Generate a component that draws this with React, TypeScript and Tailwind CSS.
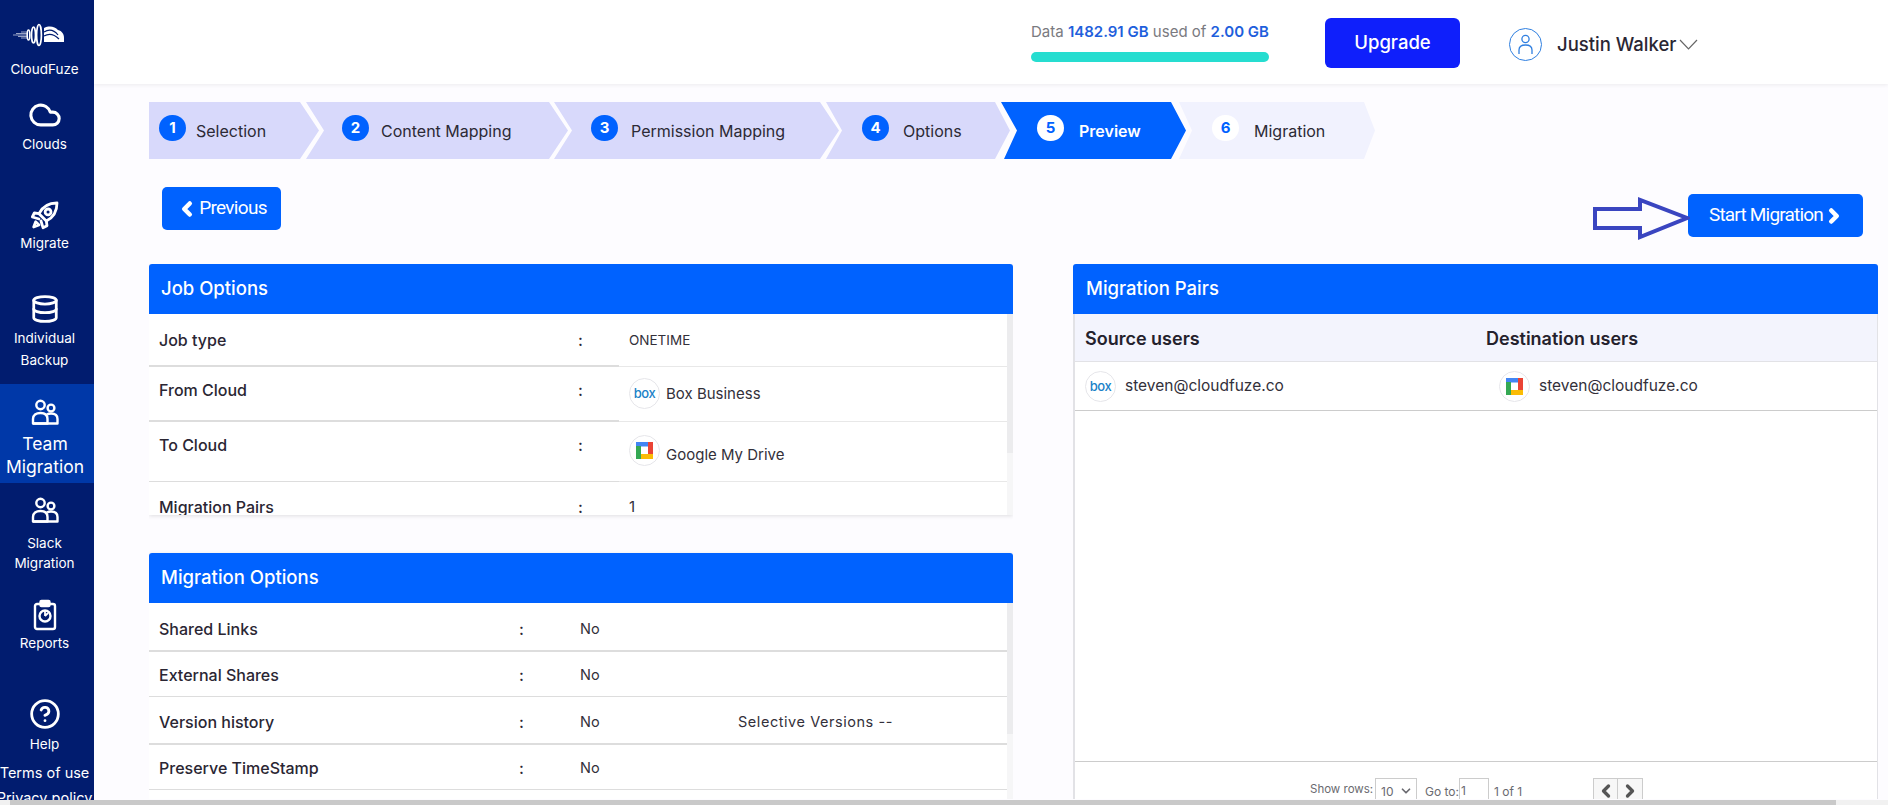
import React from "react";
import { Cloud, Database, ChevronLeft, ChevronRight, ChevronDown, CircleHelp } from "lucide-react";

function Logo() {
  return (
    <svg className="-ml-[11px]" width="52" height="24" viewBox="0 0 52 24" fill="none" stroke="#fff">
      <path d="M0 12H14M3 10.5H14M5 13.5H14M8 9H14M8 15H14" strokeWidth="0.6" />
      <ellipse cx="15.5" cy="12" rx="1.3" ry="5" strokeWidth="1.6" />
      <ellipse cx="20.5" cy="12" rx="2" ry="8" strokeWidth="1.7" />
      <ellipse cx="26" cy="12" rx="2.4" ry="10.5" strokeWidth="1.7" />
      <path d="M31 19V5C37 2 42 4 45 7C49 8 51 11 51 15V19Z" fill="#fff" stroke="none" />
      <path d="M31 9C36 6 41 7 45 12M31 13C36 10 41 11 46 16" stroke="#011c6f" strokeWidth="1.2" />
    </svg>
  );
}

function Rocket() {
  return (
    <svg width="32" height="34" viewBox="0 0 24 24" fill="none" stroke="#fff" strokeWidth="2.1" strokeLinejoin="round" strokeLinecap="round">
      <path d="M21 3C15 3 10 6 7.5 11L13 16.5C18 14 21 9 21 3Z" />
      <circle cx="14.3" cy="9.7" r="2.2" />
      <path d="M7.5 11L4 10.5L2.5 13.5L7.5 15" />
      <path d="M13 16.5L13.5 20L10.5 21.5L9 16.5" />
      <path d="M5 17L3.5 21L7.5 19.5Z" />
    </svg>
  );
}

function Team() {
  return (
    <svg width="28" height="26" viewBox="0 0 28 26" fill="none" stroke="#fff" strokeWidth="2.4" strokeLinejoin="round">
      <circle cx="9.5" cy="6" r="4.2" />
      <circle cx="20" cy="9" r="3.4" />
      <path d="M2 24.5V20C2 16 5 14 9.5 14C14 14 16.5 16 16.5 20V24.5Z" />
      <path d="M16 15.5C17 14.8 18.5 14.5 20 14.5C24 14.5 26.5 16.5 26.5 20V24.5H2" />
    </svg>
  );
}

function Report() {
  return (
    <svg width="24" height="32" viewBox="0 0 24 32" fill="none" stroke="#fff" strokeWidth="2.4" strokeLinejoin="round">
      <rect x="2" y="5" width="20" height="25" rx="2" />
      <rect x="7.5" y="2" width="9" height="5" rx="1" fill="#fff" />
      <circle cx="12" cy="17" r="5.5" />
      <path d="M12 17L15 14M12 12V17" strokeWidth="1.8" />
    </svg>
  );
}

function BoxLogo() {
  return (
    <span className="w-[31px] h-[31px] rounded-full border border-[#e6e6ea] bg-white flex items-center justify-center shrink-0">
      <span className="text-[13px] leading-none font-medium text-[#1a82c8] tracking-[-0.5px]">box</span>
    </span>
  );
}

function DriveLogo() {
  return (
    <span className="w-[31px] h-[31px] rounded-full border border-[#e6e6ea] bg-white flex items-center justify-center shrink-0">
      <svg width="17" height="17" viewBox="0 0 17 17">
        <rect x="0" y="0" width="13" height="4.5" fill="#4285f4" />
        <rect x="12" y="0" width="5" height="12" fill="#ea4335" />
        <rect x="4" y="12" width="13" height="5" fill="#fbbc05" />
        <rect x="0" y="4" width="5" height="13" fill="#34a853" />
      </svg>
    </span>
  );
}

function Step({ n, label, className, state }: { n: number; label: string; className: string; state: "done" | "active" | "todo" }) {
  const circle = state === "done" ? "bg-[#0062ff] text-white" : "bg-white text-[#0062ff]";
  const text = state === "active" ? "text-white font-semibold" : "text-[#2c2a35]";
  return (
    <div className={`h-[57px] flex items-center shrink-0 ${className}`}>
      <span className={`w-[27px] h-[26px] rounded-full flex items-center justify-center mb-[5px] text-[15px] font-bold shrink-0 ${circle}`}>{n}</span>
      <span className={`text-[16px] whitespace-nowrap ${text}`}>{label}</span>
    </div>
  );
}

function JobRow({ label, className, children }: { label: string; className: string; children: React.ReactNode }) {
  return (
    <div className="flex">
      <div className={`w-[470px] flex shrink-0 pl-[10px] border-[#ddd] ${className}`}>
        <span className="w-[419px] text-[16px] leading-[20px] font-medium text-[#2a2633]">{label}</span>
        <span className="text-[16px] leading-[20px] font-medium text-[#2a2633]">:</span>
      </div>
      <div className={`flex-1 pl-[10px] text-[15px] leading-[20px] text-[#33303a] border-[#e8e8e8] ${className.replace("border-b-2", "border-b")}`}>{children}</div>
    </div>
  );
}

function OptRow({ label, value, extra, className }: { label: string; value: string; extra?: string; className: string }) {
  return (
    <div className={`flex pl-[10px] border-[#ddd] ${className}`}>
      <span className="w-[360px] shrink-0 text-[16px] leading-[20px] font-medium text-[#2a2633]">{label}</span>
      <span className="w-[61px] shrink-0 text-[16px] leading-[20px] font-medium text-[#2a2633]">:</span>
      <span className="w-[158px] shrink-0 text-[14.5px] leading-[20px] text-[#33303a]">{value}</span>
      {extra && <span className="text-[14.5px] leading-[20px] tracking-[0.55px] text-[#33303a] whitespace-nowrap">{extra}</span>}
    </div>
  );
}

export default function App() {
  return (
    <div className="w-[1888px] h-[805px] overflow-hidden flex flex-col bg-[#fdfcff] [font-family:Inter,sans-serif]">
      <div className="flex h-[800px] overflow-hidden">
        <aside className="w-[94px] shrink-0 h-[800px] overflow-hidden bg-[#011c6f] text-white flex flex-col items-center text-center">
          <div className="h-[84px] w-full flex flex-col items-center pr-[5px] pt-[23px] gap-[13px] shrink-0">
            <Logo />
            <span className="text-[13.5px] leading-[18px] whitespace-nowrap">CloudFuze</span>
          </div>
          <div className="h-[106px] w-full flex flex-col items-center pr-[5px] pt-[14px] gap-[3px] shrink-0">
            <Cloud size={34} strokeWidth={2.2} />
            <span className="text-[13.5px] leading-[18px]">Clouds</span>
          </div>
          <div className="h-[100px] w-full flex flex-col items-center pr-[5px] pt-[8px] gap-[2px] shrink-0">
            <Rocket />
            <span className="text-[13.5px] leading-[18px]">Migrate</span>
          </div>
          <div className="h-[94px] w-full flex flex-col items-center pr-[5px] pt-[4px] shrink-0">
            <Database size={30} strokeWidth={2.2} />
            <span className="text-[13.5px] leading-[22px] mt-[3px]">Individual<br />Backup</span>
          </div>
          <div className="h-[99px] w-full bg-[#0038a8] flex flex-col items-center pr-[4px] pt-[15px] gap-[7px] shrink-0">
            <Team />
            <span className="text-[17.5px] leading-[23px]">Team<br />Migration</span>
          </div>
          <div className="h-[112px] w-full flex flex-col items-center pr-[5px] pt-[14px] gap-[10px] shrink-0">
            <Team />
            <span className="text-[13.5px] leading-[20px]">Slack<br />Migration</span>
          </div>
          <div className="h-[100px] w-full flex flex-col items-center pr-[5px] pt-[4px] gap-[3px] shrink-0">
            <Report />
            <span className="text-[13.5px] leading-[18px]">Reports</span>
          </div>
          <div className="w-full flex flex-col items-center pr-[5px] pt-[3px] shrink-0">
            <CircleHelp size={32} strokeWidth={2.1} />
            <span className="text-[13.5px] leading-[18px] mt-[5px]">Help</span>
            <span className="text-[14.5px] leading-[20px] mt-[10px] whitespace-nowrap">Terms of use</span>
            <span className="text-[14.5px] leading-[20px] mt-[5px] whitespace-nowrap">Privacy policy</span>
          </div>
        </aside>

        <div className="flex-1 min-w-0 flex flex-col">
          <header className="h-[84px] shrink-0 bg-white shadow-[0_1px_4px_rgba(0,0,0,0.07)] flex items-center">
            <div className="ml-[937px] w-[238px] shrink-0 -mt-[3px] pt-[2px]">
              <div className="text-[15px] leading-[20px] text-[#7a7a80] whitespace-nowrap">
                Data <span className="font-semibold text-[#1f5fdc]">1482.91 GB</span> used of <span className="font-semibold text-[#1f5fdc]">2.00 GB</span>
              </div>
              <div className="h-[10px] mt-[10px] rounded-[5px] bg-[#26ddd0]" />
            </div>
            <button className="ml-[56px] w-[135px] h-[50px] rounded-[6px] bg-[#0f1ffb] text-white text-[18.5px] font-medium mt-[2px] shrink-0">Upgrade</button>
            <span className="ml-[49px] w-[33px] h-[33px] rounded-full border border-[#2f7fe0] flex flex-col items-center justify-center shrink-0 mt-[4px]">
              <svg width="17" height="21" viewBox="0 0 17 21" fill="none" stroke="#2f7fe0" strokeWidth="1.3">
                <circle cx="8.5" cy="5" r="3.6" />
                <path d="M2 20V16C2 12.5 5 11 8.5 11C12 11 15 12.5 15 16V20" />
              </svg>
            </span>
            <span className="ml-[15px] text-[18.5px] font-medium text-[#2a2633] whitespace-nowrap mt-[6px]">Justin Walker</span>
            <svg className="ml-[3px] mt-[4px]" width="19" height="11" viewBox="0 0 19 11" fill="none" stroke="#666" strokeWidth="1.2">
              <path d="M1 1L9.5 10L18 1" />
            </svg>
          </header>

          <main className="flex-1 min-h-0 pl-[55px] pr-[10px] pt-[18px] relative">
            <div className="flex">
              <Step n={1} label="Selection" state="done" className="w-[170px] pl-[10px] gap-[10px] bg-[#d8d9fb] [clip-path:polygon(0_0,calc(100%_-_19px)_0,100%_50%,calc(100%_-_19px)_100%,0_100%)]" />
              <Step n={2} label="Content Mapping" state="done" className="w-[262px] ml-[-13px] pl-[36px] gap-[12px] bg-[#d8d9fb] [clip-path:polygon(0_0,calc(100%_-_19px)_0,100%_50%,calc(100%_-_19px)_100%,0_100%,18px_50%)]" />
              <Step n={3} label="Permission Mapping" state="done" className="w-[285px] ml-[-14px] pl-[37px] gap-[13px] bg-[#d8d9fb] [clip-path:polygon(0_0,calc(100%_-_19px)_0,100%_50%,calc(100%_-_19px)_100%,0_100%,18px_50%)]" />
              <Step n={4} label="Options" state="done" className="w-[184px] ml-[-13px] pl-[36px] gap-[14px] bg-[#d8d9fb] [clip-path:polygon(0_0,calc(100%_-_15px)_0,100%_50%,calc(100%_-_15px)_100%,0_100%,16px_50%)]" />
              <Step n={5} label="Preview" state="active" className="w-[185px] ml-[-9px] pl-[36px] gap-[15px] bg-[#0062ff] [clip-path:polygon(0_0,calc(100%_-_15px)_0,100%_50%,calc(100%_-_15px)_100%,3px_100%,16px_50%)]" />
              <Step n={6} label="Migration" state="todo" className="w-[196px] ml-[-7px] pl-[33px] gap-[15px] bg-[#f1f2fe] [clip-path:polygon(0_0,calc(100%_-_11px)_0,100%_50%,calc(100%_-_11px)_100%,0_100%,13px_50%)]" />
            </div>

            <div className="h-[105px] flex justify-between items-start">
              <button className="mt-[28px] ml-[13px] w-[119px] h-[43px] rounded-[5px] bg-[#0062ff] text-white text-[19px] tracking-[-0.7px] [font-family:Roboto,sans-serif] flex items-center justify-center gap-[1px]">
                <ChevronLeft size={22} strokeWidth={5} />Previous
              </button>
              <button className="mt-[35px] mr-[15px] w-[175px] h-[43px] rounded-[5px] bg-[#0062ff] text-white text-[19px] tracking-[-0.8px] [font-family:Roboto,sans-serif] flex items-center justify-center gap-0 pl-[3px]">
                Start Migration<ChevronRight size={22} strokeWidth={5} />
              </button>
            </div>
            <svg className="absolute left-[1498px] top-[113px]" width="98" height="44" viewBox="0 0 98 44" fill="none" stroke="#3a45c0" strokeWidth="4">
              <path d="M3 12H48V3L95 21L48 40V31H3Z" />
            </svg>

            <div className="flex gap-[60px] h-[535px] items-start">
              <div className="w-[864px] shrink-0 h-[535px] overflow-hidden flex flex-col gap-[38px]">
                <section className="h-[251px] shrink-0 bg-white shadow-[0_1px_4px_rgba(0,0,0,0.12)] rounded-t-[3px] overflow-hidden flex flex-col">
                  <div className="h-[50px] shrink-0 bg-[#0062ff] text-white text-[18.5px] font-medium flex items-center pl-[12px]">Job Options</div>
                  <div className="flex-1 min-h-0 flex overflow-hidden">
                    <div className="flex-1 min-w-0">
                      <JobRow label="Job type" className="h-[53px] pt-[16px] border-b-2"><span className="text-[13.5px]">ONETIME</span></JobRow>
                      <JobRow label="From Cloud" className="h-[55px] pt-[13px] border-b-2">
                        <span className="flex items-center gap-[6px] -mt-[2px]"><BoxLogo />Box Business</span>
                      </JobRow>
                      <JobRow label="To Cloud" className="h-[60px] pt-[13px] border-b">
                        <span className="flex items-center gap-[6px] mt-[0px]"><DriveLogo /><span className="mt-[8px]">Google My Drive</span></span>
                      </JobRow>
                      <JobRow label="Migration Pairs" className="h-[50px] pt-[15px]">1</JobRow>
                    </div>
                    <div className="w-[6px] shrink-0 bg-[#f6f6f7]"><div className="h-[139px] bg-[#ececee]" /></div>
                  </div>
                </section>
                <section className="flex-1 min-h-0 bg-white shadow-[0_1px_4px_rgba(0,0,0,0.12)] rounded-t-[3px] overflow-hidden flex flex-col">
                  <div className="h-[50px] shrink-0 bg-[#0062ff] text-white text-[18.5px] font-medium flex items-center pl-[12px]">Migration Options</div>
                  <div className="flex-1 min-h-0 flex overflow-hidden">
                    <div className="flex-1 min-w-0">
                      <OptRow label="Shared Links" value="No" className="h-[49px] pt-[16px] border-b-2" />
                      <OptRow label="External Shares" value="No" className="h-[45px] pt-[13px] border-b" />
                      <OptRow label="Version history" value="No" extra="Selective Versions --" className="h-[48px] pt-[15px] border-b-2" />
                      <OptRow label="Preserve TimeStamp" value="No" className="h-[45px] pt-[13px] border-b" />
                    </div>
                    <div className="w-[6px] shrink-0 bg-[#f6f6f7]"><div className="h-[131px] bg-[#ececee]" /></div>
                  </div>
                </section>
              </div>

              <section className="flex-1 min-w-0 h-[535px] rounded-t-[3px] overflow-hidden flex flex-col">
                <div className="h-[50px] shrink-0 bg-[#0062ff] text-white text-[18.5px] font-medium flex items-center pl-[13px]">Migration Pairs</div>
                <div className="flex-1 min-h-0 bg-white border-l-2 border-r border-[#e2e2e6] flex flex-col">
                  <div className="h-[48px] shrink-0 bg-[#f3f4fd] border-b border-[#e2e2e6] flex items-center pl-[10px] pt-[2px] text-[18px] font-semibold text-[#24212c]">
                    <span className="w-[401px] shrink-0">Source users</span>
                    <span>Destination users</span>
                  </div>
                  <div className="h-[49px] shrink-0 border-b border-[#ccc] flex items-center pl-[10px] text-[15.5px] text-[#33303a]">
                    <div className="w-[414px] shrink-0 flex items-center gap-[9px]"><BoxLogo />steven@cloudfuze.co</div>
                    <div className="flex items-center gap-[9px]"><DriveLogo />steven@cloudfuze.co</div>
                  </div>
                  <div className="flex-1" />
                  <div className="h-[38px] shrink-0 border-t border-[#ccc] flex items-start pt-[16px] pl-[235px] text-[11.5px] text-[#6a6a70] overflow-hidden">
                    <span className="w-[65px] shrink-0 mt-[3px] whitespace-nowrap">Show rows:</span>
                    <span className="w-[42px] h-[30px] shrink-0 border border-[#ccc] flex items-start justify-between pl-[5px] pr-[3px] pt-[4px] text-[12px]">10<ChevronDown size={14} strokeWidth={3} className="mt-[1px]" /></span>
                    <span className="ml-[8px] w-[34px] shrink-0 mt-[5px] text-[12px] whitespace-nowrap">Go to:</span>
                    <span className="w-[30px] h-[30px] shrink-0 border border-[#ccc] pl-[1px] pt-[3px] text-[12px]">1</span>
                    <span className="ml-[5px] w-[99px] shrink-0 mt-[5px] text-[12px] whitespace-nowrap">1 of 1</span>
                    <span className="w-[25px] h-[30px] shrink-0 border border-[#ccc] bg-[#f7f7f7] flex items-start justify-center pt-[2px] text-[#555]"><ChevronLeft size={20} strokeWidth={4} /></span>
                    <span className="w-[25px] h-[30px] shrink-0 border border-l-0 border-[#ccc] bg-[#f7f7f7] flex items-start justify-center pt-[2px] text-[#555]"><ChevronRight size={20} strokeWidth={4} /></span>
                  </div>
                </div>
              </section>
            </div>
          </main>
        </div>
      </div>
      <div className="h-[5px] shrink-0 bg-[#f1f1f1] pl-[10px]"><div className="h-full w-[1826px] bg-[#c9c9c9]" /></div>
    </div>
  );
}
